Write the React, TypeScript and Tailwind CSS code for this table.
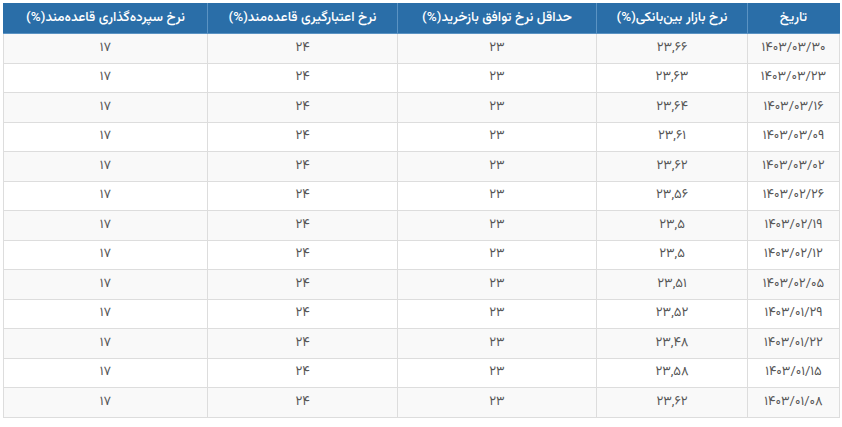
const rows: [string, string][] = [
  ['۱۴۰۳/۰۳/۳۰', '۲۳,۶۶'],
  ['۱۴۰۳/۰۳/۲۳', '۲۳,۶۳'],
  ['۱۴۰۳/۰۳/۱۶', '۲۳,۶۴'],
  ['۱۴۰۳/۰۳/۰۹', '۲۳,۶۱'],
  ['۱۴۰۳/۰۳/۰۲', '۲۳,۶۲'],
  ['۱۴۰۳/۰۲/۲۶', '۲۳,۵۶'],
  ['۱۴۰۳/۰۲/۱۹', '۲۳,۵'],
  ['۱۴۰۳/۰۲/۱۲', '۲۳,۵'],
  ['۱۴۰۳/۰۲/۰۵', '۲۳,۵۱'],
  ['۱۴۰۳/۰۱/۲۹', '۲۳,۵۲'],
  ['۱۴۰۳/۰۱/۲۲', '۲۳,۴۸'],
  ['۱۴۰۳/۰۱/۱۵', '۲۳,۵۸'],
  ['۱۴۰۳/۰۱/۰۸', '۲۳,۶۲'],
];

const headers = [
  { label: 'تاریخ', w: 'w-[92px]' },
  { label: 'نرخ بازار بین‌بانکی(%)', w: 'w-[151px]' },
  { label: 'حداقل نرخ توافق بازخرید(%)', w: 'w-[199px]' },
  { label: 'نرخ اعتبارگیری قاعده‌مند(%)', w: 'w-[190px]' },
  { label: 'نرخ سپرده‌گذاری قاعده‌مند(%)', w: 'w-[204px]' },
];

export default function App() {
  return (
    <div className="w-[842px] h-[427px] bg-white p-[3px] font-[Vazirmatn,sans-serif]">
      <table dir="rtl" className="w-[836px] border-collapse table-fixed">
        <thead>
          <tr className="h-[30px] bg-[#2a6ea8]">
            {headers.map((h) => (
              <th
                key={h.label}
                className={`${h.w} border border-[#5b93c3] border-t-[#2a6ea8] first:border-r-[#2a6ea8] last:border-l-[#2a6ea8] text-white text-[13.5px] font-medium text-center`}
              >
                {h.label}
              </th>
            ))}
          </tr>
        </thead>
        <tbody>
          {rows.map(([date, rate], i) => (
            <tr key={date} className={`h-[29.5px] ${i % 2 === 0 ? 'bg-[#f9f9f9]' : 'bg-white'}`}>
              {[date, rate, '۲۳', '۲۴', '۱۷'].map((v, j) => (
                <td key={j} className="border border-[#dddddd] text-center text-[13px] text-[#555555]">
                  {v}
                </td>
              ))}
            </tr>
          ))}
        </tbody>
      </table>
    </div>
  );
}
